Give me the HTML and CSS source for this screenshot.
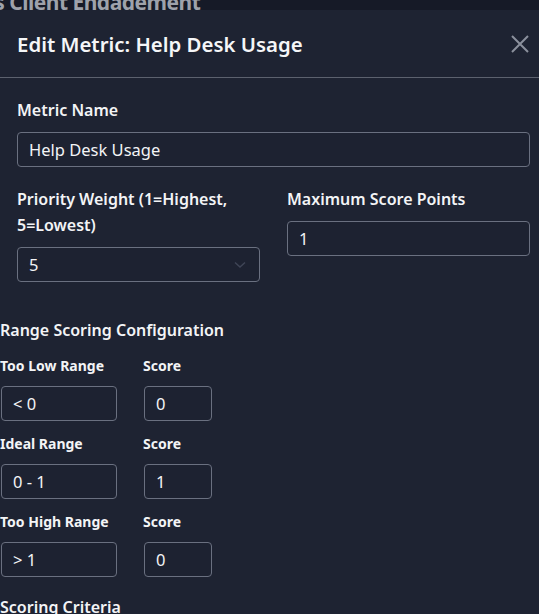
FILE: index.html
```html
<!DOCTYPE html>
<html>
<head>
<meta charset="utf-8">
<link rel="stylesheet" href="styles.css">
</head>
<body>
<div class="page">
  <h1 class="page-title">Wellness Client Engagement</h1>
</div>
<div class="modal">
  <div class="modal-header">
    <h2 class="modal-title">Edit Metric: Help Desk Usage</h2>
    <button class="close" aria-label="Close">
      <svg width="20" height="20" viewBox="0 0 20 20"><path d="M2 2 L18 18 M18 2 L2 18" stroke="#8b909c" stroke-width="2" fill="none"/></svg>
    </button>
  </div>
  <div class="modal-body">
    <div class="field">
      <label class="label">Metric Name</label>
      <div class="input">Help Desk Usage</div>
    </div>
    <div class="two-col">
      <div class="field">
        <label class="label">Priority Weight (1=Highest, 5=Lowest)</label>
        <div class="input select">5
          <svg class="chev" width="12" height="8" viewBox="0 0 12 8"><path d="M1 1.5 L6 6 L11 1.5" stroke="#3f4556" stroke-width="1.5" fill="none"/></svg>
        </div>
      </div>
      <div class="field">
        <label class="label">Maximum Score Points</label>
        <div class="input">1</div>
      </div>
    </div>
  </div>
  <div class="range">
    <h3 class="section-title">Range Scoring Configuration</h3>
    <div class="range-grid">
      <div class="small-label">Too Low Range</div>
      <div class="small-label">Score</div>
      <div class="input small wide">&lt; 0</div>
      <div class="input small narrow">0</div>
      <div class="small-label">Ideal Range</div>
      <div class="small-label">Score</div>
      <div class="input small wide">0 - 1</div>
      <div class="input small narrow">1</div>
      <div class="small-label">Too High Range</div>
      <div class="small-label">Score</div>
      <div class="input small wide">&gt; 1</div>
      <div class="input small narrow">0</div>
    </div>
    <h3 class="section-title criteria">Scoring Criteria</h3>
  </div>
</div>
</body>
</html>
```
FILE: styles.css
```css
* { box-sizing: border-box; }
html, body { margin: 0; padding: 0; }
body {
  background: #161a27;
  width: 539px;
  height: 614px;
  overflow: hidden;
  font-family: "Noto Sans", "IBM Plex Sans", sans-serif;
  color: #f3f4f6;
  position: relative;
}
.page-title {
  margin: -12px 0 0 -84px;
  font-size: 21px;
  font-weight: 700;
  color: #9ea2ab;
  white-space: nowrap;
  letter-spacing: -0.5px;
}
.modal {
  position: absolute;
  top: 10px;
  left: 0;
  width: 539px;
  height: 604px;
  background: #1e2332;
  overflow: hidden;
}
.modal-header {
  display: flex;
  align-items: center;
  justify-content: space-between;
  height: 68px;
  padding: 0 9px 0 17px;
  border-bottom: 1px solid #5c616e;
}
.modal-title {
  margin: 0;
  font-size: 20.4px;
  font-weight: 600;
  color: #f5f6f8;
}
.close {
  background: none;
  border: 0;
  padding: 0;
  width: 20px;
  height: 20px;
  display: flex;
}
.modal-body {
  padding: 19px 9px 0 17px;
}
.field { display: flex; flex-direction: column; }
.label {
  font-size: 16px;
  font-weight: 600;
  line-height: 26px;
  margin-bottom: 9px;
  color: #f3f4f6;
}
.input {
  height: 35px;
  border: 1px solid #6a7080;
  border-radius: 4px;
  background: #1d2231;
  font-size: 16.5px;
  line-height: 33px;
  padding: 0 11px;
  color: #f3f4f6;
  position: relative;
}
.select .chev {
  position: absolute;
  right: 13px;
  top: 13px;
}
.two-col {
  display: grid;
  grid-template-columns: 243px 243px;
  column-gap: 27px;
  margin-top: 19px;
  align-items: start;
}
.two-col .field:first-child .label { padding-right: 10px; }
.range { padding-top: 36px; }
.section-title {
  margin: 0;
  font-size: 16px;
  font-weight: 600;
  line-height: 24px;
}
.range-grid {
  display: grid;
  grid-template-columns: 116px 68px;
  column-gap: 27px;
  margin-top: 14px;
  padding-left: 1px;
}
.small-label {
  font-size: 14px;
  font-weight: 700;
  line-height: 20px;
  margin-left: -1px;
  margin-bottom: 10px;
}
.input.small {
  height: 35px;
  margin-bottom: 13px;
}
.criteria { margin-top: 5px; }
```
